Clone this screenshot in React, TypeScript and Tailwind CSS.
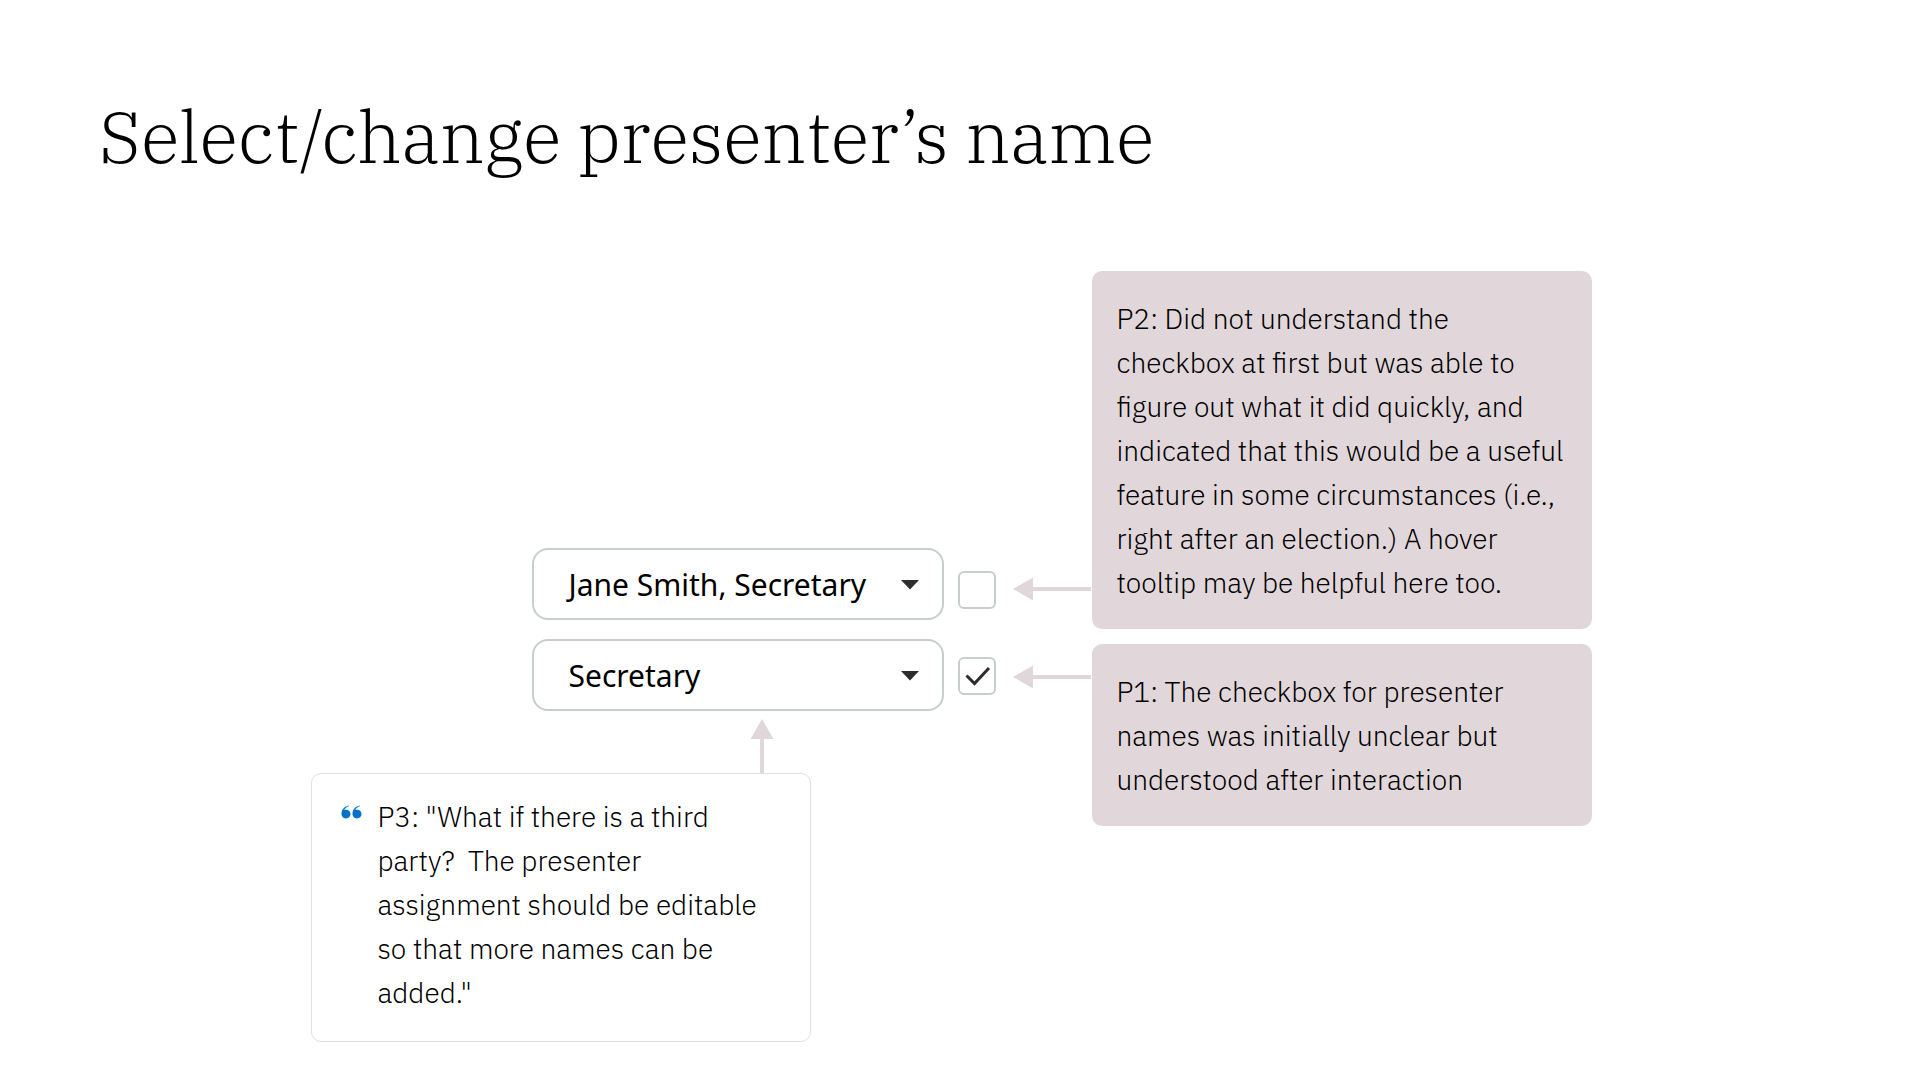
import { useState } from "react";

const sans = "font-['IBM_Plex_Sans',Roboto,sans-serif]";
const serif = "font-['IBM_Plex_Serif','Liberation_Serif',serif]";

const presenters = ["Jane Smith, Secretary", "Secretary"];

const notes = [
  "P2: Did not understand the\ncheckbox at first but was able to\nfigure out what it did quickly, and\nindicated that this would be a useful\nfeature in some circumstances (i.e.,\nright after an election.) A hover\ntooltip may be helpful here too.",
  "P1: The checkbox for presenter\nnames was initially unclear but\nunderstood after interaction",
];

const quote =
  'P3: "What if there is a third\nparty?  The presenter\nassignment should be editable\nso that more names can be\nadded."';

function PresenterSelect({ initial, label }: { initial: string; label: string }) {
  const [value, setValue] = useState(initial);

  return (
    <div className="relative">
      <select
        aria-label={label}
        value={value}
        onChange={(e) => setValue(e.target.value)}
        className="block w-full h-[72px] appearance-none rounded-2xl border-2 border-[#c8cdd0] bg-white pl-[27px] pr-16 indent-2 font-['Noto_Sans',sans-serif] text-[30px] text-black"
      >
        {presenters.map((name) => (
          <option key={name}>{name}</option>
        ))}
      </select>
      <svg
        viewBox="0 0 18 10"
        className="pointer-events-none absolute right-[25px] top-8 w-[18px] h-[10px] fill-[#2d2d2d]"
      >
        <path d="M0 0h18L9 9.5z" />
      </svg>
    </div>
  );
}

function TitleCheckbox({ initial, label }: { initial: boolean; label: string }) {
  const [checked, setChecked] = useState(initial);

  return (
    <div className="relative size-[38px]">
      <input
        type="checkbox"
        aria-label={label}
        checked={checked}
        onChange={(e) => setChecked(e.target.checked)}
        className="block size-full appearance-none rounded-md border-2 border-[#c8cdd0] bg-white"
      />
      {checked && (
        <svg
          viewBox="0 0 38 38"
          fill="none"
          className="pointer-events-none absolute inset-0 stroke-[#2d2d2d] stroke-3"
        >
          <path d="M8.5 18.5l8 8L31 11" />
        </svg>
      )}
    </div>
  );
}

function ArrowLeft() {
  return (
    <svg viewBox="0 0 78 24" className="block w-[78px] h-6 fill-[#e1d7da]">
      <path d="M0 12L20 .5V10h58v4H20v9.5z" />
    </svg>
  );
}

function ArrowUp() {
  return (
    <svg viewBox="0 0 24 54" className="block w-6 h-[54px] fill-[#e1d7da]">
      <path d="M12 0l11.5 20H14v34h-4V20H.5z" />
    </svg>
  );
}

export default function App() {
  return (
    <div className="min-h-screen bg-white text-black">
      <header className="px-[99px] pt-[90px]">
        <h1 className={`${serif} text-[72px] leading-[92px] font-light`}>
          Select/change presenter’s name
        </h1>
      </header>

      <main className="flex justify-center pt-[89px] pr-[18px] pb-[38px]">
        <div className="w-[781px] pt-[277px]">
          <div className="flex pl-[221px]">
            <div className="flex w-[412px] flex-col gap-[19px]">
              <PresenterSelect initial={presenters[0]} label="First presenter" />
              <PresenterSelect initial={presenters[1]} label="Second presenter" />
            </div>
            <div className="flex flex-col gap-12 pl-[14px] pt-[23px]">
              <TitleCheckbox initial={false} label="First presenter title only" />
              <TitleCheckbox initial={true} label="Second presenter title only" />
            </div>
            <div className="flex flex-col gap-16 pl-[17px] pt-[29px]">
              <ArrowLeft />
              <ArrowLeft />
            </div>
          </div>

          <div className="w-[500px]">
            <div className="flex justify-end pt-2 pr-[37px]">
              <ArrowUp />
            </div>
            <blockquote className="flex rounded-[10px] border border-[#e0e0e0] pt-[21px] pb-[26px] pl-[29px]">
              <svg viewBox="0 0 21 14" className="mt-[10px] mr-4 w-[21px] h-[14px] fill-[#0072c9]">
                <path d="M7.5.4C4.2 1.3 1 3.5.5 7.8.2 11 2 13.5 5 13.5c2.6 0 4.5-1.9 4.5-4.4C9.5 6.500 7.700 4.700 5.300 4.700c-.8 0-1.500.2-2 .4C4 3.200 5.700 1.900 7.900 1.300z" />
                <path d="M18.500.4c-3.300.9-6.500 3.100-7 7.400-.3 3.200 1.500 5.700 4.500 5.700 2.600 0 4.500-1.900 4.500-4.400 0-2.600-1.800-4.400-4.200-4.400-.8 0-1.500.2-2 .4.700-1.900 2.400-3.200 4.600-3.800z" />
              </svg>
              <p className={`${sans} text-[28px] leading-[44px] font-light whitespace-pre-wrap`}>
                {quote}
              </p>
            </blockquote>
          </div>
        </div>

        <div className="flex w-[500px] flex-col gap-[15px]">
          {notes.map((note) => (
            <p
              key={note}
              className={`${sans} rounded-[10px] bg-[#e1d7da] px-[25px] pt-[26px] pb-6 text-[28px] leading-[44px] font-light whitespace-pre-line`}
            >
              {note}
            </p>
          ))}
        </div>
      </main>
    </div>
  );
}
